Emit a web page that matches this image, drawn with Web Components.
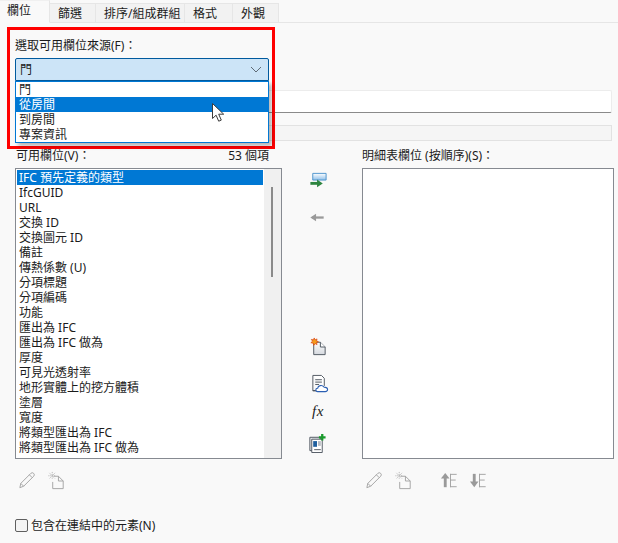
<!DOCTYPE html>
<html lang="zh-Hant">
<head>
<meta charset="utf-8">
<title>明細表屬性</title>
<style>
  html, body { margin: 0; height: 100%; overflow: hidden; background: #f9f9f9; }
  body { font: 12px/15px "Noto Sans", "Noto Sans CJK TC", sans-serif; color: #1b1b1b; }
</style>
</head>
<body>
<schedule-panel>
  <tab-strip slot="tabs">
    <tab-item active>欄位</tab-item>
    <tab-item style="width:46px">篩選</tab-item>
    <tab-item style="width:89px">排序/組成群組</tab-item>
    <tab-item style="width:48px">格式</tab-item>
    <tab-item style="width:46px">外觀</tab-item>
  </tab-strip>

  <source-combo label="選取可用欄位來源(F)：" value="門">
    <combo-option>門</combo-option>
    <combo-option selected>從房間</combo-option>
    <combo-option>到房間</combo-option>
    <combo-option>專案資訊</combo-option>
  </source-combo>

  <field-picker>
    <field-column slot="left" label="可用欄位(V)：" count="53 個項">
      <field-list scroll>
        <list-row selected>IFC 預先定義的類型</list-row>
        <list-row>IfcGUID</list-row>
        <list-row>URL</list-row>
        <list-row>交換 ID</list-row>
        <list-row>交換圖元 ID</list-row>
        <list-row>備註</list-row>
        <list-row>傳熱係數 (U)</list-row>
        <list-row>分項標題</list-row>
        <list-row>分項編碼</list-row>
        <list-row>功能</list-row>
        <list-row>匯出為 IFC</list-row>
        <list-row>匯出為 IFC 做為</list-row>
        <list-row>厚度</list-row>
        <list-row>可見光透射率</list-row>
        <list-row>地形實體上的挖方體積</list-row>
        <list-row>塗層</list-row>
        <list-row>寬度</list-row>
        <list-row>將類型匯出為 IFC</list-row>
        <list-row>將類型匯出為 IFC 做為</list-row>
      </field-list>
      <tool-row slot="tools">
        <tool-icon name="pencil"></tool-icon>
        <tool-icon name="param-off" style="margin-left:10px"></tool-icon>
      </tool-row>
    </field-column>

    <icon-rail slot="middle">
      <tool-icon name="add" style="margin-top:3px"></tool-icon>
      <tool-icon name="remove" style="margin-top:17px;margin-left:-2px"></tool-icon>
      <tool-icon name="param" style="margin-top:109px"></tool-icon>
      <tool-icon name="cloud" style="margin-top:17px;margin-left:4px"></tool-icon>
      <tool-icon name="fx" style="margin-top:7px"></tool-icon>
      <tool-icon name="combine" style="margin-top:12px;margin-left:-2px"></tool-icon>
    </icon-rail>

    <field-column slot="right" label="明細表欄位 (按順序)(S)：" wide>
      <field-list></field-list>
      <tool-row slot="tools">
        <tool-icon name="pencil"></tool-icon>
        <tool-icon name="param-off" style="margin-left:10px"></tool-icon>
        <tool-icon name="up" style="margin-left:26px"></tool-icon>
        <tool-icon name="down" style="margin-left:9px"></tool-icon>
      </tool-row>
    </field-column>
  </field-picker>

  <check-option>包含在連結中的元素(N)</check-option>
</schedule-panel>

<script>
class SchedulePanel extends HTMLElement {
  constructor() {
    super();
    this.attachShadow({ mode: 'open' });
    this.shadowRoot.innerHTML = `
      <style>
        :host { display: block; position: relative; width: 618px; height: 543px; overflow: hidden; }
        .body { display: flex; flex-direction: column; padding: 0 6px 0 15px; }
        .highlight {
          position: absolute; left: 7px; top: 27px; width: 262px; height: 116px;
          border: 3px solid #f00; pointer-events: none;
        }
      </style>
      <slot name="tabs"></slot>
      <div class="body"><slot></slot></div>
      <div class="highlight"></div>
    `;
  }
}

class TabStrip extends HTMLElement {
  constructor() {
    super();
    this.attachShadow({ mode: 'open' });
    this.shadowRoot.innerHTML = `
      <style>
        :host { display: flex; align-items: flex-end; height: 23px; box-sizing: border-box; border-bottom: 1px solid #e6e6e6; }
      </style>
      <slot></slot>
    `;
  }
}

class TabItem extends HTMLElement {
  constructor() {
    super();
    this.attachShadow({ mode: 'open' });
    this.shadowRoot.innerHTML = `
      <style>
        :host {
          display: flex; align-items: center; box-sizing: border-box;
          height: 20px; margin-bottom: -1px; background: #f2f2f2;
          border: 1px solid #e6e6e6; border-left-width: 0; padding: 1px 0 0 8px; white-space: nowrap;
        }
        :host([active]) {
          width: 50px; height: 23px; background: #f9f9f9; border-bottom-color: #f9f9f9; padding: 0 0 2px 7px;
          border-top-color: #f0f0f0;
        }
      </style>
      <slot></slot>
    `;
  }
}

class SourceCombo extends HTMLElement {
  constructor() {
    super();
    this.attachShadow({ mode: 'open' });
    this.shadowRoot.innerHTML = `
      <style>
        :host { display: block; width: 254px; }
        .label { padding-top: 15px; height: 20px; }
        .box {
          display: flex; align-items: center; justify-content: space-between; position: relative;
          box-sizing: border-box; height: 23px; margin-top: 0; padding: 0 6px 0 4px;
          background: #cce4f7; border: 1px solid #005a9e; border-radius: 2px 2px 0 0;
        }
        svg { display: block; }
        .popup {
          position: absolute; left: -1px; top: 22px; width: 254px; box-sizing: border-box; z-index: 2;
          height: 62px; background: #fff; border: 1px solid #0078d4;
          box-shadow: 3px 3px 4px rgba(0,0,0,.28);
        }
        .cursor { position: absolute; left: 195px; top: 20px; }
      </style>
      <div class="label"></div>
      <div class="box">
        <span class="value"></span>
        <svg width="12" height="7" viewBox="0 0 12 7"><path d="M1 1l5 5 5-5" fill="none" stroke="#5f6b76"/></svg>
        <div class="popup">
          <slot></slot>
          <svg class="cursor" width="16" height="22" viewBox="0 0 16 22">
            <path d="M1.5 1.5v15l3.6-3.3 2.6 6 2.6-1.1-2.6-5.9h5z" fill="#fff" stroke="#3c3c3c" stroke-linejoin="round"/>
          </svg>
        </div>
      </div>
    `;
  }
  connectedCallback() {
    this.shadowRoot.querySelector('.label').textContent = this.getAttribute('label');
    this.shadowRoot.querySelector('.value').textContent = this.getAttribute('value');
  }
}

class ComboOption extends HTMLElement {
  constructor() {
    super();
    this.attachShadow({ mode: 'open' });
    this.shadowRoot.innerHTML = `
      <style>
        :host { display: block; height: 15px; line-height: 15px; padding-left: 3px; }
        :host([selected]) { background: #0078d4; color: #fff; }
      </style>
      <slot></slot>
    `;
  }
}

// the text box and the greyed box sit behind the open dropdown
class FieldPicker extends HTMLElement {
  constructor() {
    super();
    this.attachShadow({ mode: 'open' });
    this.shadowRoot.innerHTML = `
      <style>
        :host { display: block; }
        .input {
          height: 23px; margin-top: 9px; box-sizing: border-box; background: #fff;
          border: 1px solid #ececec; border-bottom: 1px solid #8a8a8a; border-radius: 2px;
        }
        .bar { height: 16px; margin-top: 12px; box-sizing: border-box; background: #f5f5f5; border: 1px solid #e2e2e2; }
        .cols { display: flex; margin-top: 6px; }
      </style>
      <div class="input"></div>
      <div class="bar"></div>
      <div class="cols">
        <slot name="left"></slot>
        <slot name="middle"></slot>
        <slot name="right"></slot>
      </div>
    `;
  }
}

class FieldColumn extends HTMLElement {
  constructor() {
    super();
    this.attachShadow({ mode: 'open' });
    this.shadowRoot.innerHTML = `
      <style>
        :host { display: block; flex: none; width: 267px; }
        :host([wide]) { width: 252px; }
        .head { display: flex; justify-content: space-between; height: 19px; padding: 2px 13px 0 1px; line-height: 14px; }
        :host([wide]) .head { padding-right: 0; padding-left: 0; }
      </style>
      <div class="head"><span class="label"></span><span class="count"></span></div>
      <slot></slot>
      <slot name="tools"></slot>
    `;
  }
  connectedCallback() {
    this.shadowRoot.querySelector('.label').textContent = this.getAttribute('label');
    this.shadowRoot.querySelector('.count').textContent = this.getAttribute('count') || '';
  }
}

class FieldList extends HTMLElement {
  constructor() {
    super();
    this.attachShadow({ mode: 'open' });
    this.shadowRoot.innerHTML = `
      <style>
        :host {
          display: flex; box-sizing: border-box; height: 291px; background: #fff;
          border: 1px solid #868a91; overflow: hidden;
        }
        .rows { flex: 1; min-width: 0; padding: 1px 1px 0 1px; }
        .track { display: none; flex: none; width: 17px; background: #f0f0f0; position: relative; }
        :host([scroll]) .track { display: block; }
        .thumb { position: absolute; left: 7px; top: 18px; width: 2px; height: 90px; background: #8a8a8a; }
      </style>
      <div class="rows"><slot></slot></div>
      <div class="track"><div class="thumb"></div></div>
    `;
  }
}

class ListRow extends HTMLElement {
  constructor() {
    super();
    this.attachShadow({ mode: 'open' });
    this.shadowRoot.innerHTML = `
      <style>
        :host { display: block; height: 15px; line-height: 15px; padding-left: 2px; white-space: nowrap; }
        :host([selected]) { background: #0078d4; color: #fff; }
      </style>
      <slot></slot>
    `;
  }
}

class IconRail extends HTMLElement {
  constructor() {
    super();
    this.attachShadow({ mode: 'open' });
    this.shadowRoot.innerHTML = `
      <style>
        :host { display: flex; flex: none; flex-direction: column; align-items: center; width: 80px; padding: 21px 8px 0 0; box-sizing: border-box; }
      </style>
      <slot></slot>
    `;
  }
}

class ToolRow extends HTMLElement {
  constructor() {
    super();
    this.attachShadow({ mode: 'open' });
    this.shadowRoot.innerHTML = `
      <style>
        :host { display: flex; padding: 12px 0 0 2px; }
      </style>
      <slot></slot>
    `;
  }
}

const ICONS = {
  add: `<path d="M4.5 2.5h14v7h-14z" fill="url(#g)" stroke="#4d93cc"/>
        <path d="M2 13h9" stroke="#2e8540" stroke-width="3"/><path d="M9 9l6 4-6 4z" fill="#2e8540"/>`,
  remove: `<path d="M5 10h12" stroke="#9a9a9a" stroke-width="2.4"/><path d="M9 6l-6 4 6 4z" fill="#9a9a9a"/>`,
  param: `<path d="M5.5 5.5h7l5 5v8h-12z" fill="url(#p)" stroke="#4f5660"/><path d="M12.5 5.5v5h5" fill="#fff" stroke="#4f5660"/>
          <path d="M6 1l1 2 2-1-.5 2.2L10.500 5l-2 .8.500 2.200-2-1-1.500 1.800-.5-2.300-2.500-.5 1.800-1.600L3 2.500l2.200.5z" fill="#f59b1c" stroke="#d8400f" stroke-width=".7"/>`,
  cloud: `<path d="M2.500 1.500h9l3 3v8M7 17.500H2.500z" fill="#fff" stroke="#4f5660"/><path d="M2.500 1.500v16h5" fill="none" stroke="#4f5660"/>
          <path d="M5 6h7M5 8.500h7M5 11h4" stroke="#4f5660"/>
          <path d="M7.500 18.500c-2.500 0-2.500-3.500 0-3.500 .5-3 4.500-4 6.500-1.500 .5 .5 1 .5 1.500 .5 3 0 3.500 4.500 0 4.500z" fill="#fff" stroke="#2b5fb3" stroke-width="1.200"/>`,
  combine: `<path d="M2.500 4.500h11v14h-11z" fill="#e9ebee" stroke="#4f5660"/><path d="M4.500 6.500h11v14h-11z" fill="#fff" stroke="#4f5660"/>
            <path d="M6 8.500h4v6H6z" fill="#1f5f9e"/><path d="M11 8.500h3v5h-3z" fill="#b8bcc2"/><path d="M7 17.500h7" stroke="#4f5660"/>
            <path d="M15.500 1v7M12 4.500h7" stroke="#1a9a2c" stroke-width="2.400"/>`,
  pencil: `<path d="M2.500 17.500l1-4.500L14 2.500a1.500 1.500 0 0 1 3 3L6.500 16z M3.500 13l3 3 M12.500 4l3 3" fill="none" stroke="#a3a3a3"/>`,
  'param-off': `<path d="M6.500 5.500h5l5 5v8h-11v-7" fill="none" stroke="#a3a3a3"/><path d="M11.500 5.500v5h5" fill="none" stroke="#a3a3a3"/>
                <path d="M2 2l6 6M8 2l-6 6M5 1v8M1 5h8" stroke="#b0b0b0" stroke-dasharray="1 1"/>`,
  up: `<path d="M5 7v10" stroke="#9a9a9a" stroke-width="3"/><path d="M5 2l4.500 6h-9z" fill="#9a9a9a"/>
       <rect x="10" y="3" width="1" height="14" fill="#a3a3a3"/><rect x="10" y="3" width="7" height="1" fill="#a3a3a3"/><rect x="10" y="9" width="6" height="1" fill="#a3a3a3"/><rect x="10" y="16" width="7" height="1" fill="#a3a3a3"/>`,
  down: `<path d="M5 3v10" stroke="#9a9a9a" stroke-width="3"/><path d="M5 17l-4.500-6h9z" fill="#9a9a9a"/>
       <rect x="10" y="3" width="1" height="14" fill="#a3a3a3"/><rect x="10" y="3" width="7" height="1" fill="#a3a3a3"/><rect x="10" y="9" width="6" height="1" fill="#a3a3a3"/><rect x="10" y="16" width="7" height="1" fill="#a3a3a3"/>`
};

class ToolIcon extends HTMLElement {
  constructor() {
    super();
    this.attachShadow({ mode: 'open' });
  }
  connectedCallback() {
    const name = this.getAttribute('name');
    const inner = name === 'fx'
      ? '<span class="fx">fx</span>'
      : `<svg width="20" height="20" viewBox="0 0 20 21">
           <defs>
             <linearGradient id="g" x1="0" y1="0" x2="0" y2="1"><stop offset="0" stop-color="#fff"/><stop offset="1" stop-color="#8fc0ea"/></linearGradient>
             <linearGradient id="p" x1="0" y1="0" x2="0" y2="1"><stop offset="0" stop-color="#fff"/><stop offset="1" stop-color="#d5d9df"/></linearGradient>
           </defs>
           ${ICONS[name]}
         </svg>`;
    this.shadowRoot.innerHTML = `
      <style>
        :host { display: flex; align-items: center; justify-content: center; width: 20px; height: 20px; flex: none; }
        svg { display: block; }
        .fx { font: italic 15px/20px "Liberation Serif", serif; color: #222; letter-spacing: .5px; }
      </style>
      ${inner}
    `;
  }
}

class CheckOption extends HTMLElement {
  constructor() {
    super();
    this.attachShadow({ mode: 'open' });
    this.shadowRoot.innerHTML = `
      <style>
        :host { display: flex; align-items: center; gap: 3px; margin-top: 26px; height: 16px; }
        .box { width: 11px; height: 11px; background: #f4f4f4; border: 1px solid #5f5f5f; border-radius: 2px; }
      </style>
      <span class="box"></span><slot></slot>
    `;
  }
}

customElements.define('schedule-panel', SchedulePanel);
customElements.define('tab-strip', TabStrip);
customElements.define('tab-item', TabItem);
customElements.define('source-combo', SourceCombo);
customElements.define('combo-option', ComboOption);
customElements.define('field-picker', FieldPicker);
customElements.define('field-column', FieldColumn);
customElements.define('field-list', FieldList);
customElements.define('list-row', ListRow);
customElements.define('icon-rail', IconRail);
customElements.define('tool-row', ToolRow);
customElements.define('tool-icon', ToolIcon);
customElements.define('check-option', CheckOption);
</script>
</body>
</html>
